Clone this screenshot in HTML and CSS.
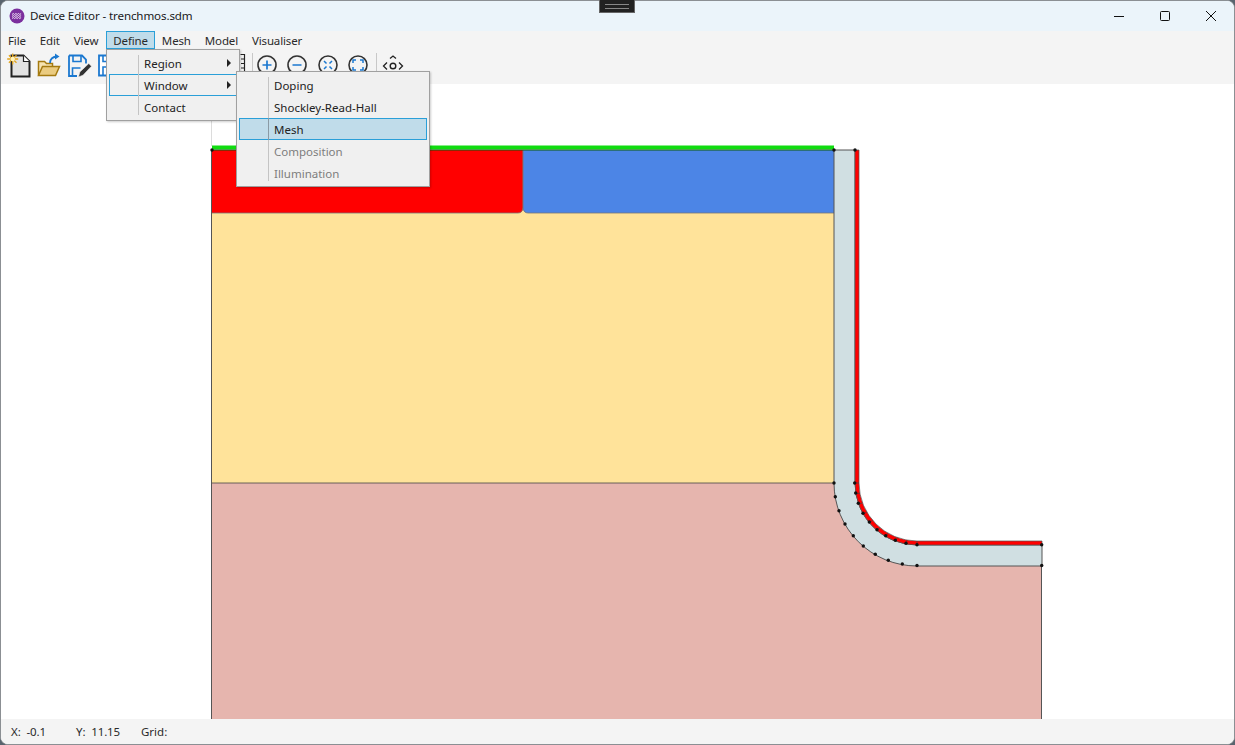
FILE: index.html
```html
<!DOCTYPE html>
<html lang="en">
<head>
  <meta charset="UTF-8">
  <title>Device Editor - trenchmos.sdm</title>
  <link rel="stylesheet" href="styles.css">
</head>
<body>

  <div class="window">

    <div class="titlebar">
      <svg class="app-icon" width="16" height="16" viewBox="0 0 16 16">
        <circle cx="8" cy="8" r="7.5" fill="#7b2f9e"/>
        <path d="M3 6.500l1.300-1 1.300 1 1.300-1 1.300 1 1.300-1 1.300 1 1.300-1M3 8.500l1.300-1 1.300 1 1.300-1 1.300 1 1.300-1 1.300 1 1.300-1M3 10.500l1.300-1 1.300 1 1.300-1 1.300 1 1.300-1 1.300 1 1.300-1" fill="none" stroke="#f0e4f6" stroke-width="1"/>
      </svg>
      <span class="title">Device Editor - trenchmos.sdm</span>
      <div class="window-buttons">
        <svg width="12" height="12" viewBox="0 0 12 12"><path d="M1 6.500h10" stroke="#111" fill="none"/></svg>
        <svg width="12" height="12" viewBox="0 0 12 12"><rect x="1.500" y="1.500" width="9" height="9" rx="1" stroke="#111" fill="none"/></svg>
        <svg width="12" height="12" viewBox="0 0 12 12"><path d="M1 1l10 10M11 1L1 11" stroke="#111" fill="none"/></svg>
      </div>
    </div>

    <div class="menubar">
      <span class="menu-item">File</span>
      <span class="menu-item">Edit</span>
      <span class="menu-item">View</span>
      <span class="menu-item open">Define</span>
      <span class="menu-item">Mesh</span>
      <span class="menu-item">Model</span>
      <span class="menu-item">Visualiser</span>
    </div>

    <div class="toolbar">
      <svg class="tool" width="26" height="26" viewBox="0 0 26 26">
        <path d="M5.500 3.500h12l6 6v15h-18z" fill="#e3e3e3" stroke="#222" stroke-width="2"/>
        <path d="M17.500 3.500v6h6" fill="#fff" stroke="#222" stroke-width="1.200"/>
        <path d="M6.700 1.500v11M1.200 7h11M2.900 3.200l7.600 7.600M10.500 3.200l-7.600 7.600" stroke="#e2a41c" stroke-width="1.300"/>
        <circle cx="6.700" cy="7" r="2.300" fill="#fff2b8"/>
      </svg>
      <svg class="tool" width="26" height="26" viewBox="0 0 26 26">
        <path d="M2.500 23.500v-14h6l2 2h6v3" fill="#f6e3b0" stroke="#a47a10" stroke-width="1.500"/>
        <path d="M2.500 23.500l4-9h17l-4 9z" fill="#eacb80" stroke="#a47a10" stroke-width="1.500"/>
        <path d="M14 11c0-4 3-6.500 7-6.500" fill="none" stroke="#1b78d0" stroke-width="1.800"/>
        <path d="M19 1.500l4.500 3-4.500 3z" fill="#1b78d0"/>
      </svg>
      <svg class="tool" width="26" height="26" viewBox="0 0 26 26">
        <path d="M3 3.500h13l4 4v4M11 24H3V3.500" fill="none" stroke="#1b78d0" stroke-width="1.800"/>
        <path d="M7 3.500v6h8v-6M6.500 23v-7h8" fill="none" stroke="#1b78d0" stroke-width="1.600"/>
        <path d="M12.500 25l1.300-5 9-8.500 2.700 2.700-8.500 9z" fill="#333" stroke="#f4f4f4" stroke-width="0.600"/>
      </svg>
      <svg class="tool" width="26" height="26" viewBox="0 0 26 26">
        <path d="M3 3.500h16l4 4v16H3z" fill="#fff" stroke="#1b78d0" stroke-width="1.800"/>
        <path d="M7 3.500v6h10v-6M7 23v-8h12v8" fill="none" stroke="#1b78d0" stroke-width="1.600"/>
      </svg>
      <div class="tool-spacer">
        <svg width="12" height="24" viewBox="0 0 12 24">
          <path d="M6.500 1.500h4v21h-4M7 6h3M7 10.500h3M7 15h3M7 19.500h3" fill="none" stroke="#222" stroke-width="1.200"/>
        </svg>
      </div>
      <span class="tool-sep"></span>
      <svg class="zoom-tool first" width="22" height="22" viewBox="0 0 22 22">
        <path d="M6 18.500A9 9 0 1 1 16 18.500" fill="none" stroke="#333" stroke-width="1.600"/>
        <path d="M6.500 11h9M11 6.500v9" stroke="#1b78d0" stroke-width="1.700"/>
      </svg>
      <svg class="zoom-tool" width="22" height="22" viewBox="0 0 22 22">
        <path d="M6 18.500A9 9 0 1 1 16 18.500" fill="none" stroke="#333" stroke-width="1.600"/>
        <path d="M6.500 11h9" stroke="#1b78d0" stroke-width="1.700"/>
      </svg>
      <svg class="zoom-tool wide" width="22" height="22" viewBox="0 0 22 22">
        <circle cx="11" cy="11" r="9" fill="none" stroke="#333" stroke-width="1.600"/>
        <path d="M7 7l2.500 2.500M15 7l-2.500 2.500M7 15l2.500-2.500M15 15l-2.500-2.500" stroke="#1b78d0" stroke-width="1.500"/>
      </svg>
      <svg class="zoom-tool" width="22" height="22" viewBox="0 0 22 22">
        <circle cx="11" cy="11" r="9" fill="none" stroke="#333" stroke-width="1.600"/>
        <path d="M6 9V6h3M13 6h3v3M16 13v3h-3M9 16H6v-3" fill="none" stroke="#1b78d0" stroke-width="1.500"/>
      </svg>
      <span class="tool-sep last"></span>
      <svg class="tool-last" width="22" height="22" viewBox="0 0 22 22">
        <circle cx="11" cy="12" r="2.800" fill="none" stroke="#222" stroke-width="1.400"/>
        <path d="M8 4.500l3-2.500 3 2.500M5 8.500L1.500 12 5 15.500M17 8.500l3.500 3.500-3.500 3.500" fill="none" stroke="#222" stroke-width="1.300"/>
      </svg>
    </div>

    <div class="canvas">
      <svg class="device" width="1233" height="635" viewBox="1 84 1233 635">
        <path d="M212 483H855A62 62 0 0 0 917 545H1042V719H212Z" fill="#e6b5ae"/>
        <rect x="212" y="200" width="622" height="283" fill="#ffe39a"/>
        <path d="M834 483H212" stroke="#444" stroke-width="0.800" fill="none"/>
        <path d="M212 150H523V208Q523 213 518 213H212Z" fill="#ff0000"/>
        <path d="M523 150H834V213H528Q523 213 523 208Z" fill="#4c85e6"/>
        <path d="M523 150V208" stroke="#777" stroke-width="1" fill="none"/>
        <path d="M212 213H518Q522 213 523 208Q524 213 528 213H834" stroke="#777" stroke-width="0.800" fill="none"/>
        <path d="M212 147.500H834" stroke="#10dc10" stroke-width="4"/>
        <path d="M212 150H834" stroke="#0a5a0a" stroke-width="1"/>
        <path d="M211.500 84V146" stroke="#dcdcdc" stroke-width="1" fill="none"/>
        <path d="M211.500 150V719" stroke="#555" stroke-width="1" fill="none"/>
        <path d="M1041.500 566V719" stroke="#555" stroke-width="1" fill="none"/>
        <path d="M834 150H855V483A62 62 0 0 0 917 545H1042V566H917A83 83 0 0 1 834 483Z" fill="#d0dfe2" stroke="#555" stroke-width="1"/>
        <path d="M855 150H859V483A58 58 0 0 0 917 541H1042V545H917A62 62 0 0 1 855 483Z" fill="#ff0000" stroke="#555" stroke-width="0.700"/>
        <path d="M855 483H859M855.900 493.800L859.900 493.100M858.700 504.200L862.500 502.800M863.300 514L866.800 512M869.500 522.900L872.600 520.300M877.100 530.500L879.700 527.400M886 536.700L888 533.200M895.800 541.300L897.200 537.500M906.200 544.100L906.900 540.100M917 545V541" stroke="#444" stroke-width="0.700" fill="none"/>
        <g fill="#111">
          <circle cx="212" cy="150" r="1.700"/>
          <circle cx="834" cy="150" r="1.700"/>
          <circle cx="855" cy="150" r="1.700"/>
          <circle cx="834" cy="483" r="1.700"/>
          <circle cx="835.300" cy="496.700" r="1.700"/>
          <circle cx="839" cy="510.700" r="1.700"/>
          <circle cx="845" cy="524" r="1.700"/>
          <circle cx="853.300" cy="535.700" r="1.700"/>
          <circle cx="863.300" cy="546" r="1.700"/>
          <circle cx="875.300" cy="554.300" r="1.700"/>
          <circle cx="888.300" cy="560.300" r="1.700"/>
          <circle cx="902.300" cy="564" r="1.700"/>
          <circle cx="917" cy="565.500" r="1.700"/>
          <circle cx="1041.700" cy="565.500" r="1.700"/>
          <circle cx="854.700" cy="483" r="1.700"/>
          <circle cx="855.700" cy="493" r="1.700"/>
          <circle cx="858.300" cy="503.300" r="1.700"/>
          <circle cx="863" cy="513.300" r="1.700"/>
          <circle cx="869.300" cy="522" r="1.700"/>
          <circle cx="877" cy="529.700" r="1.700"/>
          <circle cx="885.700" cy="535.700" r="1.700"/>
          <circle cx="895.300" cy="540.300" r="1.700"/>
          <circle cx="906" cy="543.300" r="1.700"/>
          <circle cx="917" cy="544.700" r="1.700"/>
          <circle cx="1041.700" cy="544.700" r="1.700"/>
        </g>
      </svg>
    </div>

    <div class="statusbar">
      <span class="status-x">X:&nbsp; -0.1</span>
      <span class="status-y">Y:&nbsp; 11.15</span>
      <span>Grid:</span>
    </div>

    <div class="menu define-menu">
      <div class="menu-row"><span class="row-label">Region</span><span class="arrow"></span></div>
      <div class="menu-row hover"><span class="row-label">Window</span><span class="arrow"></span></div>
      <div class="menu-row"><span class="row-label">Contact</span></div>
    </div>

    <div class="menu window-menu">
      <div class="menu-row"><span class="row-label">Doping</span></div>
      <div class="menu-row"><span class="row-label">Shockley-Read-Hall</span></div>
      <div class="menu-row selected"><span class="row-label">Mesh</span></div>
      <div class="menu-row disabled"><span class="row-label">Composition</span></div>
      <div class="menu-row disabled"><span class="row-label">Illumination</span></div>
    </div>

  </div>

  <div class="snap-handle"></div>

</body>
</html>
```

FILE: styles.css
```css
* {
  box-sizing: border-box;
}

html, body {
  margin: 0;
  height: 100%;
  overflow: hidden;
}

body {
  font-family: "Noto Sans", "Open Sans", sans-serif;
  font-size: 11.5px;
  color: #222;
  background-color: #59646e;
}

.window {
  position: relative;
  display: flex;
  flex-direction: column;
  height: 745px;
  background-color: #fff;
  border: 1px solid #8b8f93;
  border-radius: 8px;
  overflow: hidden;
}

.titlebar {
  display: flex;
  align-items: center;
  height: 30px;
  flex-shrink: 0;
  padding-left: 8px;
  padding-bottom: 1px;
  background-color: #ebf4fa;
}

.app-icon {
  margin-right: 5px;
}

.title {
  color: #1a1a1a;
  font-size: 11.6px;
  letter-spacing: -0.13px;
}

.window-buttons {
  display: flex;
  gap: 34px;
  margin-left: auto;
  margin-right: 17px;
}

.menubar {
  display: flex;
  height: 21px;
  flex-shrink: 0;
  align-items: flex-start;
  background-color: #f4f4f4;
}

.menu-item {
  height: 18px;
  padding: 1px 6px 0;
  line-height: 16px;
  letter-spacing: -0.15px;
  border: 1px solid transparent;
  color: #2a2a2a;
}

.menu-item.open {
  margin-left: 1px;
  background-color: #c0dcea;
  border-color: #2a9fd8;
}

.toolbar {
  display: flex;
  align-items: center;
  height: 32px;
  flex-shrink: 0;
  padding-left: 5px;
  padding-bottom: 6px;
  background-color: #f4f4f4;
}

.tool {
  margin-right: 4px;
}

.tool-spacer {
  display: flex;
  justify-content: flex-end;
  width: 120px;
  margin-right: 6px;
}

.tool-sep {
  width: 1px;
  height: 24px;
  background-color: #c8c8c8;
}

.tool-sep.last {
  margin-left: 7px;
}

.zoom-tool {
  margin-left: 8px;
}

.zoom-tool.first {
  margin-left: 3px;
}

.zoom-tool.wide {
  margin-left: 9px;
}

.tool-last {
  margin-left: 5px;
}

.canvas {
  flex: 1;
  min-height: 0;
  background-color: #fff;
}

.device {
  display: block;
}

.statusbar {
  display: flex;
  align-items: center;
  height: 25px;
  flex-shrink: 0;
  padding-left: 10px;
  background-color: #f4f4f4;
  color: #2a2a2a;
}

.status-x,
.status-y {
  width: 65px;
  letter-spacing: -0.1px;
}

/* dropdowns sit over the toolbar and canvas */
.menu {
  position: absolute;
  padding: 2px;
  background-color: #f0f0f0;
  border: 1px solid #a0a0a0;
  box-shadow: 1px 1px 2px rgba(0, 0, 0, 0.2);
}

.define-menu {
  left: 105px;
  top: 48px;
  width: 134px;
  z-index: 2;
}

.window-menu {
  left: 235px;
  top: 70px;
  width: 194px;
  z-index: 3;
}

.menu-row {
  position: relative;
  display: flex;
  align-items: center;
  height: 22px;
  padding-left: 34px;
  border: 1px solid transparent;
}

.menu-row::before {
  content: "";
  position: absolute;
  left: 28px;
  top: -1px;
  bottom: -1px;
  width: 1px;
  background-color: #c4c4c4;
}

.menu-row:first-child::before {
  top: 2px;
}

.menu-row:last-child::before {
  bottom: 2px;
}

.menu-row.hover {
  border-color: #2a9fd8;
}

.menu-row.selected {
  background-color: #c0dcea;
  border-color: #2a9fd8;
}

.menu-row.selected::before {
  background-color: #8a9aa4;
}

.menu-row.disabled .row-label {
  color: #7d7d7d;
}

.arrow {
  position: absolute;
  right: 5px;
  top: 6px;
  border-left: 4px solid #222;
  border-top: 4px solid transparent;
  border-bottom: 4px solid transparent;
}

.snap-handle {
  position: absolute;
  left: 599px;
  top: 0;
  width: 36px;
  height: 13px;
  background-color: #222;
  border: 1px solid #666;
  border-top: none;
}

.snap-handle::before {
  content: "";
  display: block;
  height: 3px;
  margin: 4px 5px 0;
  border-top: 1px solid #888;
  border-bottom: 1px solid #888;
}
```
